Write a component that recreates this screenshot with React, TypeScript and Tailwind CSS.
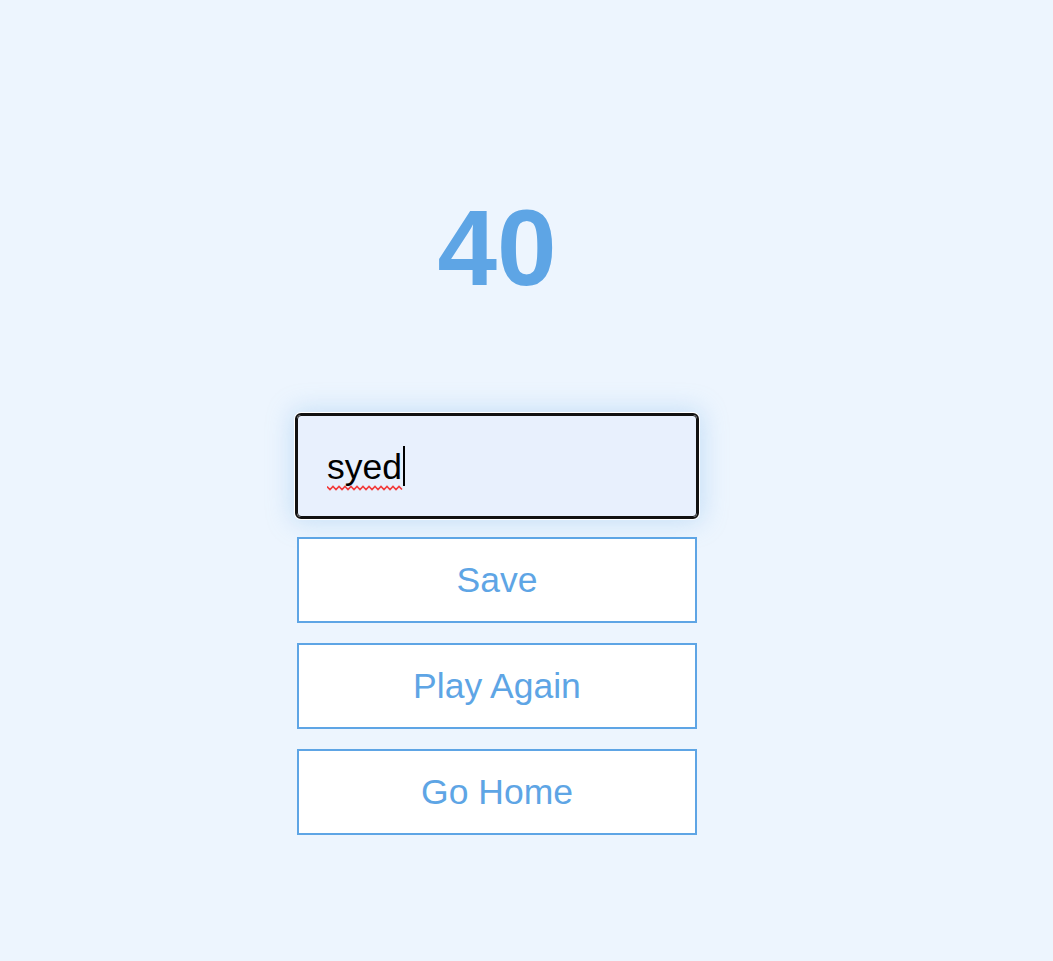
export default function App() {
  return (
    <div className="min-h-[961px] w-full bg-[#edf5fe]" style={{ fontFamily: '"Liberation Sans", Arial, sans-serif' }}>
      <div className="flex w-[994px] flex-col items-center pt-[184px]">
        <div className="text-[107px] font-bold leading-[129px] text-[#5ea5e5]">40</div>
        <div className="mt-[102px] flex flex-col gap-[20px]">
          <div className="flex h-[102px] w-[400px] items-center rounded-[4px] border border-[#111] bg-[#e8f0fd] pl-[29px] outline-2 outline-[#111] shadow-[0_0_0_3px_#ffffff,0_0_24px_6px_rgba(130,185,235,0.35)]">
            <span className="relative mt-[3px] text-[35.5px] leading-none text-black">
              syed
              <svg className="absolute left-0 top-[35px]" width="76" height="6" viewBox="0 0 76 6">
                <path
                  d="M0 1.5 L3 4.5 L6 1.5 L9 4.5 L12 1.5 L15 4.5 L18 1.5 L21 4.5 L24 1.5 L27 4.5 L30 1.5 L33 4.5 L36 1.5 L39 4.5 L42 1.5 L45 4.5 L48 1.5 L51 4.5 L54 1.5 L57 4.5 L60 1.5 L63 4.5 L66 1.5 L69 4.5 L72 1.5 L75 4.5"
                  fill="none"
                  stroke="#f23b3b"
                  strokeWidth="1.6"
                />
              </svg>
            </span>
            <span className="ml-[1px] h-[40px] w-[2px] bg-black" />
          </div>
          <button className="h-[86px] w-[400px] border-2 border-[#5ea5e5] bg-white pt-[2px] text-[35.5px] text-[#5ea5e5]">Save</button>
          <button className="h-[86px] w-[400px] border-2 border-[#5ea5e5] bg-white pt-[2px] text-[35.5px] text-[#5ea5e5]">Play Again</button>
          <button className="h-[86px] w-[400px] border-2 border-[#5ea5e5] bg-white pt-[2px] text-[35.5px] text-[#5ea5e5]">Go Home</button>
        </div>
      </div>
    </div>
  );
}
